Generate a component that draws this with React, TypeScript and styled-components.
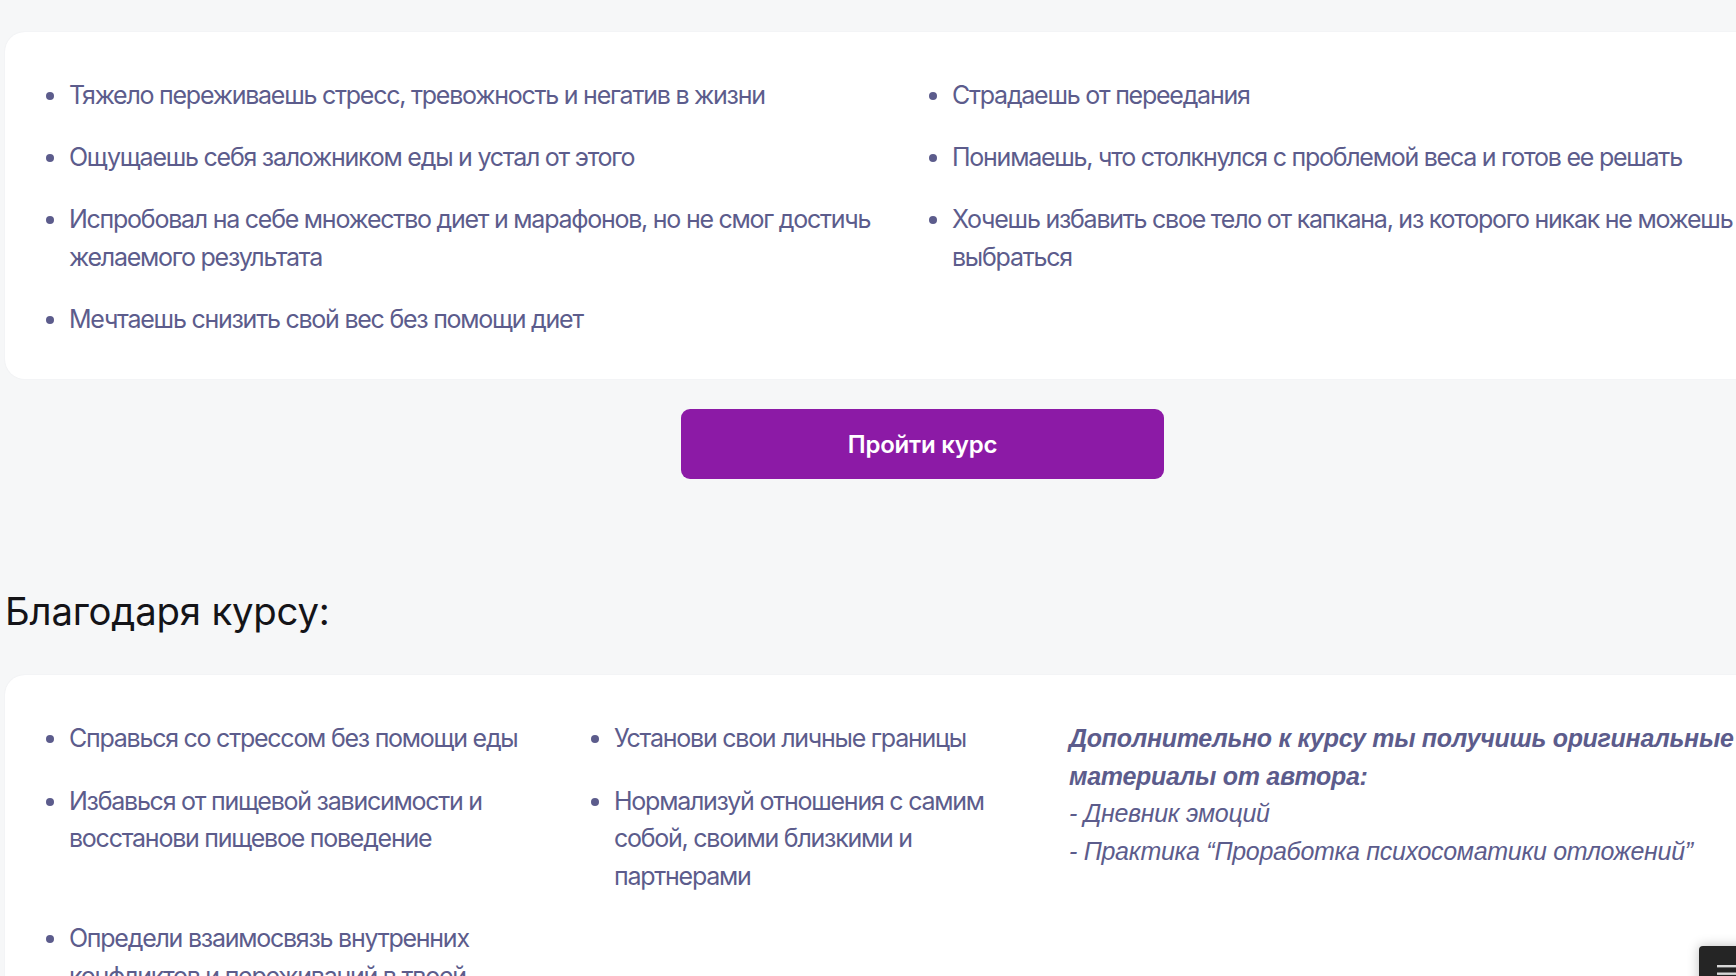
import React from "react";
import styled, { createGlobalStyle } from "styled-components";

const Global = createGlobalStyle`
  html, body {
    margin: 0;
    padding: 0;
    background: #f6f7f8;
    overflow: hidden;
  }
  body {
    font-family: "Inter", "Noto Sans", sans-serif;
    -webkit-font-smoothing: antialiased;
  }
`;

const Page = styled.div`
  width: 1835px;
  padding: 32px 0 0 5px;
  display: flex;
  flex-direction: column;
`;

const Card = styled.section`
  background: #ffffff;
  border-radius: 20px;
  box-shadow: 0 0 2px rgba(40, 40, 80, 0.06);
  padding: 45px 40px 41px 40px;
  display: flex;
  align-items: flex-start;
`;

const Grid = styled.ul<{ $cols: string; $gap: number }>`
  list-style: none;
  margin: 0;
  padding: 0;
  display: grid;
  grid-template-columns: ${(p) => p.$cols};
  row-gap: ${(p) => p.$gap}px;
  align-items: start;
`;

const Item = styled.li<{ $pr: number }>`
  position: relative;
  padding-left: 24px;
  padding-right: ${(p) => p.$pr}px;
  font-size: 25px;
  line-height: 37.5px;
  letter-spacing: -0.05em;
  color: #5c5c8c;

  &::before {
    content: "";
    position: absolute;
    left: 1px;
    top: 15px;
    width: 8px;
    height: 8px;
    border-radius: 50%;
    background: #5c5c8c;
  }
`;

const Empty = styled.li`
  list-style: none;
`;

const ButtonRow = styled.div`
  display: flex;
  justify-content: center;
  margin-top: 30px;
`;

const CTA = styled.button`
  width: 483px;
  height: 70px;
  border: none;
  border-radius: 9px;
  background: #8c1aa6;
  color: #ffffff;
  font-family: "Inter", sans-serif;
  font-size: 24px;
  font-weight: 600;
  letter-spacing: -0.01em;
  cursor: pointer;
`;

const Heading = styled.h2`
  margin: 109px 0 41px 0;
  font-size: 38.3px;
  line-height: 46px;
  font-weight: 400;
  letter-spacing: -0.005em;
  color: #141418;
`;

const Extra = styled.div`
  margin-left: 1px;
  width: 740px;
  font-family: "Liberation Sans", Arial, sans-serif;
  font-style: italic;
  font-size: 25px;
  line-height: 37.5px;
  letter-spacing: -0.012em;
  color: #5c5c8c;
`;

const ExtraLead = styled.div`
  font-weight: 700;
`;

const ExtraLine = styled.div`
  font-weight: 400;
`;

const Widget = styled.div`
  position: fixed;
  left: 1699px;
  top: 946px;
  width: 80px;
  height: 80px;
  background: #252525;
  box-shadow: 0 0 12px rgba(0, 0, 0, 0.25);
  border-radius: 4px 0 0 0;
`;

const WidgetIcon = styled.svg`
  position: absolute;
  left: 18px;
  top: 18px;
`;

const problems: string[] = [
  "Тяжело переживаешь стресс, тревожность и негатив в жизни",
  "Страдаешь от переедания",
  "Ощущаешь себя заложником еды и устал от этого",
  "Понимаешь, что столкнулся с проблемой веса и готов ее решать",
  "Испробовал на себе множество диет и марафонов, но не смог достичь желаемого результата",
  "Хочешь избавить свое тело от капкана, из которого никак не можешь выбраться",
  "Мечтаешь снизить свой вес без помощи диет",
];

const results: (string | null)[] = [
  "Справься со стрессом без помощи еды",
  "Установи свои личные границы",
  "Избавься от пищевой зависимости и восстанови пищевое поведение",
  "Нормализуй отношения с самим собой, своими близкими и партнерами",
  "Определи взаимосвязь внутренних конфликтов и переживаний в твоей жизни с лишним весом",
  null,
];

export default function App() {
  return (
    <>
      <Global />
      <Page>
        <Card>
          <Grid $cols="883px 883px" $gap={24.5}>
            {problems.map((t) => (
              <Item key={t} $pr={20}>
                {t}
              </Item>
            ))}
          </Grid>
        </Card>

        <ButtonRow>
          <CTA type="button">Пройти курс</CTA>
        </ButtonRow>

        <Heading>Благодаря курсу:</Heading>

        <Card>
          <Grid $cols="545px 478px" $gap={25}>
            {results.map((t, i) =>
              t ? (
                <Item key={i} $pr={i % 2 === 0 ? 60 : 20}>
                  {t}
                </Item>
              ) : (
                <Empty key={i} />
              )
            )}
          </Grid>
          <Extra>
            <ExtraLead>
              Дополнительно к курсу ты получишь оригинальные материалы от автора:
            </ExtraLead>
            <ExtraLine>- Дневник эмоций</ExtraLine>
            <ExtraLine>- Практика “Проработка психосоматики отложений”</ExtraLine>
          </Extra>
        </Card>
      </Page>
      <Widget>
        <WidgetIcon width="22" height="20" viewBox="0 0 22 20">
          <rect x="0" y="1" width="22" height="2.4" fill="#d8d8d8" />
          <rect x="0" y="8.5" width="22" height="2.4" fill="#d8d8d8" />
          <rect x="0" y="16" width="22" height="2.4" fill="#d8d8d8" />
        </WidgetIcon>
      </Widget>
    </>
  );
}
